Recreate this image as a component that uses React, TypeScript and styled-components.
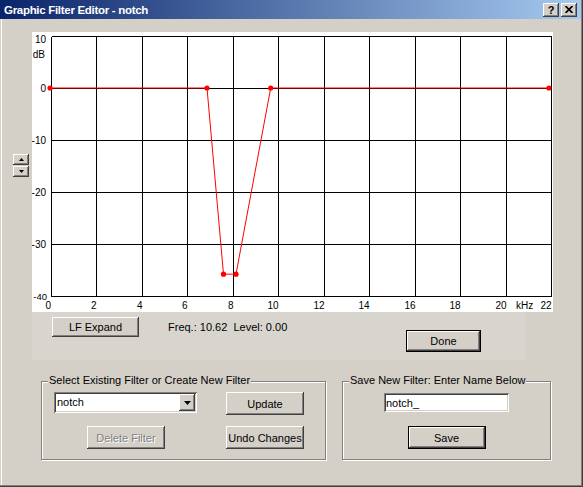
import React from "react";
import styled, { createGlobalStyle } from "styled-components";

const GlobalStyle = createGlobalStyle`
  html, body {
    margin: 0;
    padding: 0;
    background: #d4d0c8;
  }
  body {
    font-family: "Liberation Sans", Arial, sans-serif;
    font-size: 11px;
    color: #000;
  }
`;

const raised = `
  box-shadow: inset -1px -1px #404040, inset 1px 1px #ffffff,
    inset -2px -2px #808080, inset 2px 2px #d4d0c8;
`;

const sunken = `
  box-shadow: inset 1px 1px #808080, inset -1px -1px #ffffff,
    inset 2px 2px #404040, inset -2px -2px #d4d0c8;
`;

const Window = styled.div`
  width: 583px;
  height: 487px;
  box-sizing: border-box;
  display: flex;
  flex-direction: column;
  background: #d4d0c8;
  box-shadow: inset -1px -1px #404040, inset -2px -2px #808080,
    inset 1px 0 #d4d0c8, inset 2px 0 #ffffff;
`;

const TitleBar = styled.div`
  height: 19px;
  margin-right: 2px;
  box-sizing: border-box;
  display: flex;
  align-items: center;
  padding: 0 4px 0 4px;
  background: linear-gradient(to right, #0a246a, #a6caf0);
`;

const Title = styled.div`
  flex: 1;
  padding-top: 1px;
  color: #fff;
  font-family: "Liberation Sans", Arial, sans-serif;
  font-weight: bold;
  font-size: 11.5px;
  letter-spacing: -0.3px;
  white-space: nowrap;
`;

const CaptionButtons = styled.div`
  display: flex;
  gap: 2px;
`;

const CaptionButton = styled.div`
  width: 16px;
  height: 14px;
  background: #d4d0c8;
  ${raised}
  display: flex;
  align-items: center;
  justify-content: center;
  font-weight: bold;
  font-size: 11px;
  line-height: 14px;
  color: #000;
`;

const Body = styled.div`
  display: flex;
  flex-direction: column;
  padding: 13px 0 0 13px;
`;

const TopRow = styled.div`
  display: flex;
  align-items: flex-start;
  gap: 3px;
`;

const Spin = styled.div`
  margin-top: 122px;
  width: 16px;
  display: flex;
  flex-direction: column;
  gap: 1px;
`;

const SpinButton = styled.div`
  width: 16px;
  height: 11px;
  background: #d4d0c8;
  ${raised}
  display: flex;
  align-items: center;
  justify-content: center;
`;

const ChartColumn = styled.div`
  display: flex;
  flex-direction: column;
`;

const ChartSvg = styled.svg`
  display: block;
  background: #ffffff;
`;

const Strip = styled.div`
  width: 493px;
  height: 48px;
  box-sizing: border-box;
  background: #d8d5cf;
  display: flex;
  align-items: flex-start;
  padding: 5px 0 0 20px;
`;

const Button = styled.button<{ $w: number; $h: number; $default?: boolean }>`
  width: ${(p) => p.$w}px;
  height: ${(p) => p.$h}px;
  box-sizing: border-box;
  padding: 0;
  margin: 0;
  border: ${(p) => (p.$default ? "1px solid #000" : "none")};
  background: #d4d0c8;
  ${raised}
  font-family: "Liberation Sans", Arial, sans-serif;
  font-size: 11px;
  color: #000;
  outline: none;

  &:disabled {
    color: #808080;
    text-shadow: 1px 1px #ffffff;
  }
`;

const Info = styled.div`
  margin-left: 29px;
  line-height: 20px;
  white-space: pre;
`;

const DoneButton = styled(Button)`
  margin: 13px 44px 0 auto;
`;

const GroupRow = styled.div`
  display: flex;
  gap: 16px;
  margin: 21px 0 0 28px;
`;

const Group = styled.div<{ $w: number }>`
  position: relative;
  width: ${(p) => p.$w}px;
  height: 79px;
  box-sizing: border-box;
  border: 1px solid #808080;
  box-shadow: inset 1px 1px #ffffff, 1px 1px #ffffff;
`;

const Legend = styled.div`
  position: absolute;
  top: -8px;
  left: 6px;
  padding: 0 1px;
  line-height: 13px;
  background: #d4d0c8;
  white-space: nowrap;
`;

const SelectGrid = styled.div`
  display: grid;
  grid-template-columns: 143px 78px;
  column-gap: 29px;
  row-gap: 11px;
  padding: 10px 0 0 12px;
  align-items: start;
`;

const Combo = styled.div`
  width: 143px;
  height: 21px;
  box-sizing: border-box;
  padding: 2px;
  background: #fff;
  ${sunken}
  display: flex;
  align-items: center;
`;

const ComboText = styled.div`
  flex: 1;
  padding-left: 1px;
  line-height: 17px;
`;

const ComboArrow = styled.div`
  width: 16px;
  height: 17px;
  background: #d4d0c8;
  ${raised}
  display: flex;
  align-items: center;
  justify-content: center;
`;

const DeleteButton = styled(Button)`
  margin-left: 33px;
`;

const SaveColumn = styled.div`
  display: flex;
  flex-direction: column;
  align-items: center;
  gap: 14px;
  padding-top: 11px;
`;

const NameInput = styled.input`
  width: 125px;
  height: 19px;
  box-sizing: border-box;
  border: none;
  margin: 0;
  padding: 0 2px;
  background: #fff;
  ${sunken}
  font-family: "Liberation Sans", Arial, sans-serif;
  font-size: 11px;
  color: #000;
  outline: none;
`;

const PX = 19;
const PY = 4;
const PW = 500;
const PH = 260;
const xOf = (k: number) => PX + (k / 22) * PW;
const yOf = (db: number) => PY + ((10 - db) / 50) * PH;

const curve: [number, number][] = [
  [-0.044, 0],
  [6.864, 0],
  [7.59, -35.8],
  [8.14, -35.8],
  [9.667, 0],
  [21.91, 0],
];

function Chart() {
  const vx = Array.from({ length: 12 }, (_, i) => Math.round(xOf(i * 2)) + 0.5);
  const hy = Array.from({ length: 6 }, (_, i) => Math.round(yOf(10 - i * 10)) + 0.5);
  const yLabels = [10, 0, -10, -20, -30, -40];
  const pts = curve.map(([k, d]) => `${xOf(k)},${yOf(d)}`).join(" ");
  return (
    <ChartSvg width={521} height={280} viewBox="0 0 521 280">
      <g stroke="#000" strokeWidth={1} shapeRendering="crispEdges">
        {vx.map((x) => (
          <line key={"v" + x} x1={x} y1={hy[0]} x2={x} y2={hy[5]} />
        ))}
        {hy.map((y) => (
          <line key={"h" + y} x1={vx[0]} y1={y} x2={vx[11]} y2={y} />
        ))}
      </g>
      <g fontFamily='"Liberation Sans", Arial, sans-serif' fontSize={10} fill="#000">
        {yLabels.map((v) => (
          <text
            key={"y" + v}
            x={v === -40 ? 15 : 14}
            y={v === 10 ? 10.5 : yOf(v) + 3.6}
            textAnchor="end"
            fontSize={v === -40 ? 9.5 : 10}
          >
            {v}
          </text>
        ))}
        <text x={13} y={25.5} textAnchor="end">
          dB
        </text>
        {vx.map((x, i) =>
          i === 0 ? null : (
            <text key={"x" + i} x={x} y={277} textAnchor="end">
              {i * 2}
            </text>
          )
        )}
        <text x={vx[0] - 0.5} y={277} textAnchor="end">
          0
        </text>
        <text x={484} y={277}>
          kHz
        </text>
      </g>
      <polyline points={pts} fill="none" stroke="#ff0000" strokeWidth={1} />
      {curve.map(([k, d], i) => (
        <circle key={"p" + i} cx={xOf(k)} cy={yOf(d)} r={2.6} fill="#ff0000" />
      ))}
    </ChartSvg>
  );
}

export default function App() {
  return (
    <>
      <GlobalStyle />
      <Window>
        <TitleBar>
          <Title>Graphic Filter Editor - notch</Title>
          <CaptionButtons>
            <CaptionButton>?</CaptionButton>
            <CaptionButton>
              <svg width="8" height="7" viewBox="0 0 8 7">
                <path d="M0.5 0 L7.5 7 M7.5 0 L0.5 7" stroke="#000" strokeWidth="1.7" />
              </svg>
            </CaptionButton>
          </CaptionButtons>
        </TitleBar>
        <Body>
          <TopRow>
            <Spin>
              <SpinButton>
                <svg width="5" height="3" viewBox="0 0 5 3">
                  <polygon points="2.5,0 5,3 0,3" fill="#000" />
                </svg>
              </SpinButton>
              <SpinButton>
                <svg width="5" height="3" viewBox="0 0 5 3">
                  <polygon points="0,0 5,0 2.5,3" fill="#000" />
                </svg>
              </SpinButton>
            </Spin>
            <ChartColumn>
              <Chart />
              <Strip>
                <Button $w={87} $h={20}>
                  LF Expand
                </Button>
                <Info>Freq.: 10.62  Level: 0.00</Info>
                <DoneButton $w={75} $h={22} $default>
                  Done
                </DoneButton>
              </Strip>
            </ChartColumn>
          </TopRow>
          <GroupRow>
            <Group $w={285}>
              <Legend>Select Existing Filter or Create New Filter</Legend>
              <SelectGrid>
                <Combo>
                  <ComboText>notch</ComboText>
                  <ComboArrow>
                    <svg width="7" height="4" viewBox="0 0 7 4">
                      <polygon points="0,0 7,0 3.5,4" fill="#000" />
                    </svg>
                  </ComboArrow>
                </Combo>
                <Button $w={78} $h={23}>
                  Update
                </Button>
                <DeleteButton $w={78} $h={23} disabled>
                  Delete Filter
                </DeleteButton>
                <Button $w={78} $h={23}>
                  Undo Changes
                </Button>
              </SelectGrid>
            </Group>
            <Group $w={209}>
              <Legend>Save New Filter: Enter Name Below</Legend>
              <SaveColumn>
                <NameInput defaultValue="notch_" />
                <Button $w={78} $h={23} $default>
                  Save
                </Button>
              </SaveColumn>
            </Group>
          </GroupRow>
        </Body>
      </Window>
    </>
  );
}
